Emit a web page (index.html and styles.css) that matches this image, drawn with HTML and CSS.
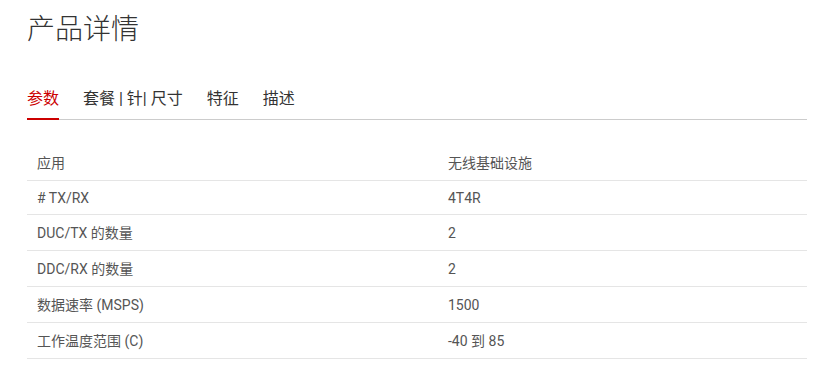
FILE: index.html
```html
<!DOCTYPE html>
<html lang="zh-CN">
<head>
<meta charset="utf-8">
<title>产品详情</title>
<link rel="stylesheet" href="styles.css">
</head>
<body>
<main class="page">
  <h1 class="title">产品详情</h1>
  <nav class="tabs">
    <a class="tab tab-active">参数</a>
    <a class="tab">套餐 | 针| 尺寸</a>
    <a class="tab">特征</a>
    <a class="tab">描述</a>
  </nav>
  <table class="params">
    <colgroup><col class="col-name"><col class="col-value"></colgroup>
    <tbody>
      <tr><td>应用</td><td>无线基础设施</td></tr>
      <tr class="row-latin"><td># TX/RX</td><td>4T4R</td></tr>
      <tr><td>DUC/TX 的数量</td><td>2</td></tr>
      <tr><td>DDC/RX 的数量</td><td>2</td></tr>
      <tr><td>数据速率 (MSPS)</td><td>1500</td></tr>
      <tr><td>工作温度范围 (C)</td><td>-40 到 85</td></tr>
    </tbody>
  </table>
</main>
</body>
</html>
```

FILE: styles.css
```css
* { box-sizing: border-box; }

html, body {
  margin: 0;
  padding: 0;
  background: #fff;
}

body {
  font-family: Roboto, "Noto Sans CJK SC", sans-serif;
  color: #333;
}

.page {
  width: 780px;
  margin-left: 27px;
  padding-top: 7px;
}

.title {
  margin: 0;
  font-family: "Noto Sans CJK SC", sans-serif;
  font-size: 28px;
  line-height: 40px;
  font-weight: 300;
  color: #333;
}

.tabs {
  display: flex;
  gap: 24px;
  margin-top: 40px;
  border-bottom: 1px solid #ccc;
}

.tab {
  display: block;
  font-size: 16px;
  line-height: 24px;
  padding-bottom: 7px;
  border-bottom: 2px solid transparent;
  margin-bottom: -1px;
  color: #333;
  font-family: Roboto, "Noto Sans CJK SC", sans-serif;
  cursor: pointer;
}

.tab-active {
  color: #c00;
  border-bottom-color: #c00;
}

.params {
  width: 780px;
  margin-top: 25px;
  border-collapse: collapse;
  table-layout: fixed;
  font-size: 14px;
  color: #555;
}

.col-name { width: 411px; }

.params td {
  padding: 8px 10px 7px;
  line-height: 20px;
  border-bottom: 1px solid #e5e5e5;
  vertical-align: middle;
}

.params .row-latin td {
  line-height: 18px;
}
```
